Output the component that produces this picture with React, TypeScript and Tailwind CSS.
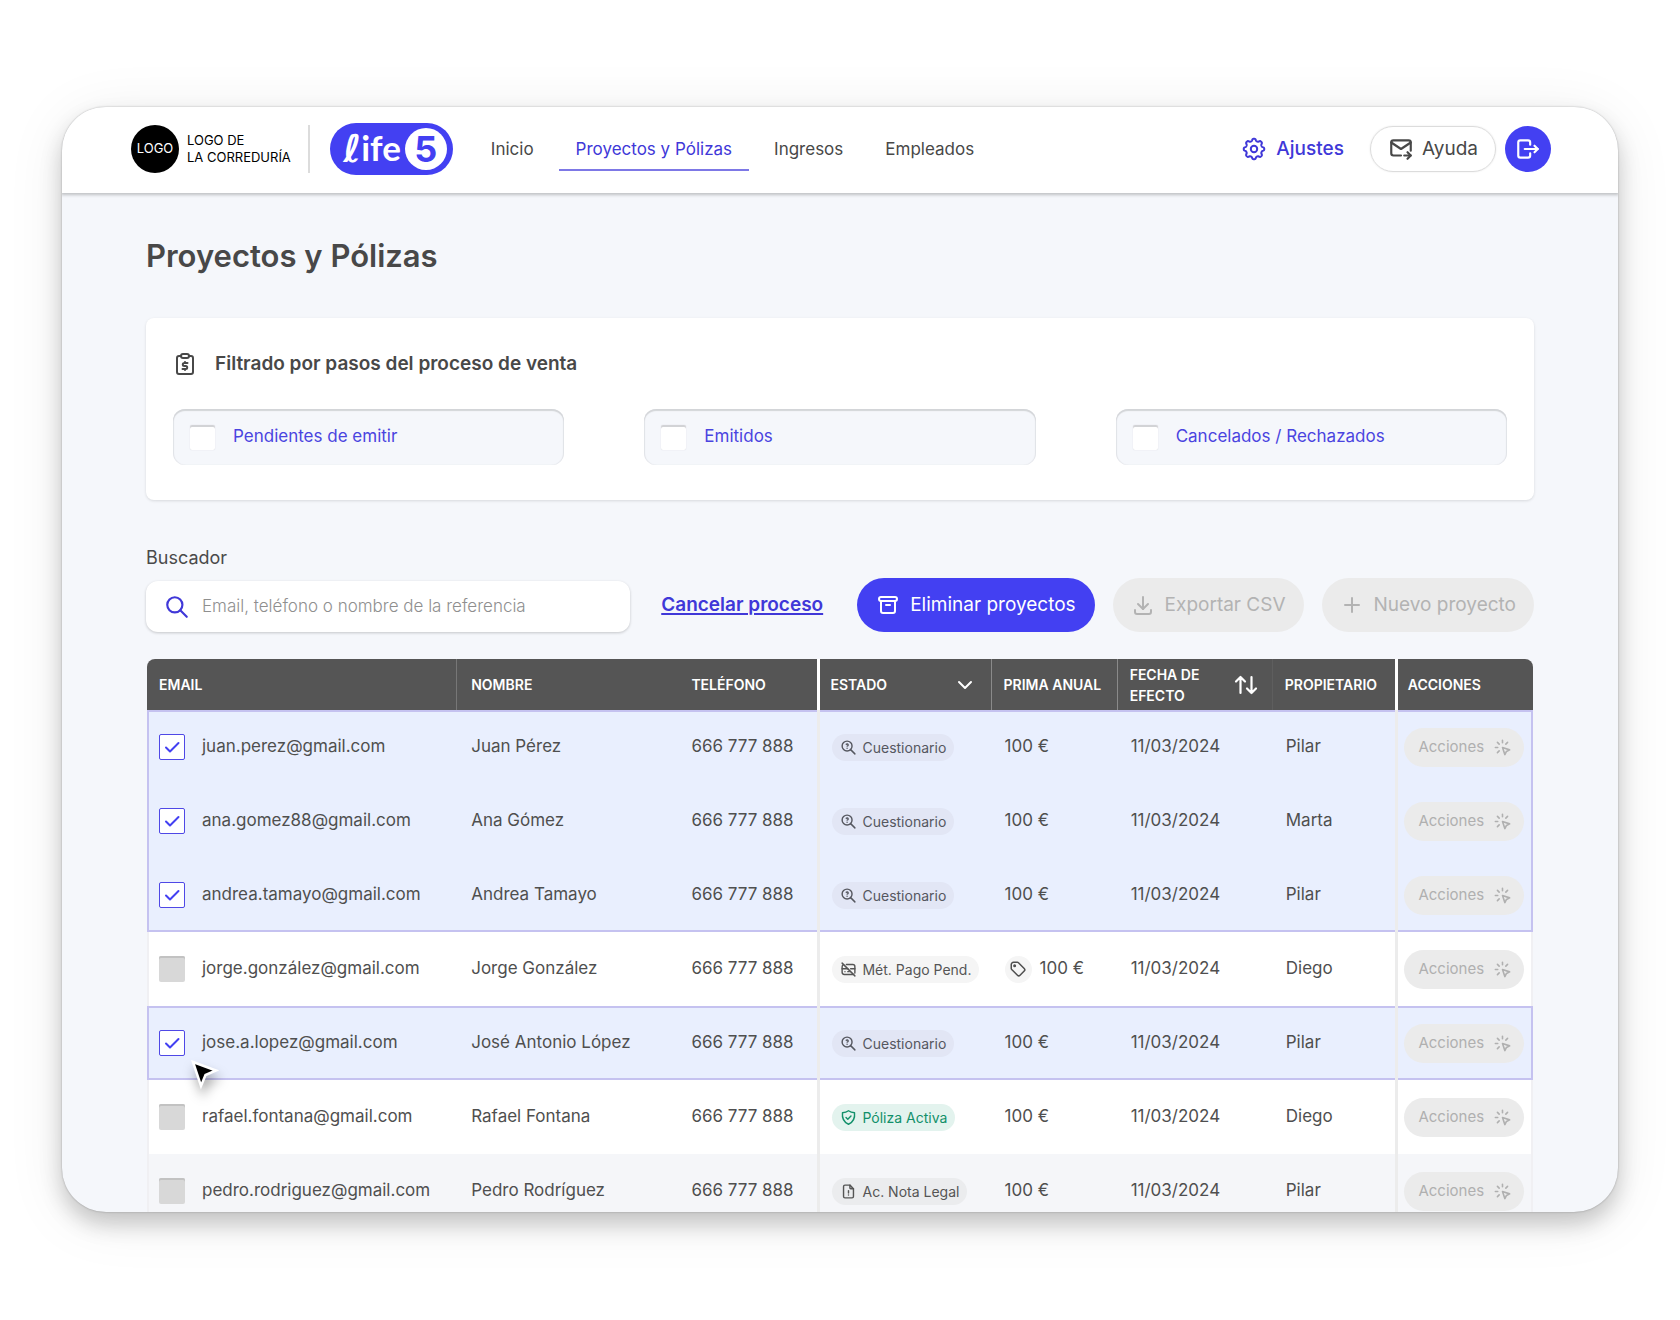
import React, { useState } from 'react';
import {
  TbArchive,
  TbChevronDown,
  TbClick,
  TbCreditCardOff,
  TbDownload,
  TbFileAlert,
  TbLogout,
  TbMailForward,
  TbPlus,
  TbSearch,
  TbTag,
  TbZoomQuestion,
} from 'react-icons/tb';

type Status = 'cuestionario' | 'pago' | 'activa' | 'legal';

interface Project {
  email: string;
  name: string;
  owner: string;
  status: Status;
  discount?: boolean;
}

const projects: Project[] = [
  { email: 'juan.perez@gmail.com', name: 'Juan Pérez', owner: 'Pilar', status: 'cuestionario' },
  { email: 'ana.gomez88@gmail.com', name: 'Ana Gómez', owner: 'Marta', status: 'cuestionario' },
  { email: 'andrea.tamayo@gmail.com', name: 'Andrea Tamayo', owner: 'Pilar', status: 'cuestionario' },
  { email: 'jorge.gonzález@gmail.com', name: 'Jorge González', owner: 'Diego', status: 'pago', discount: true },
  { email: 'jose.a.lopez@gmail.com', name: 'José Antonio López', owner: 'Pilar', status: 'cuestionario' },
  { email: 'rafael.fontana@gmail.com', name: 'Rafael Fontana', owner: 'Diego', status: 'activa' },
  { email: 'pedro.rodriguez@gmail.com', name: 'Pedro Rodríguez', owner: 'Pilar', status: 'legal' },
];

const statuses = {
  cuestionario: { label: 'Cuestionario', icon: TbZoomQuestion, style: 'bg-[#e2e6f5] text-[#55575f]' },
  pago: { label: 'Mét. Pago Pend.', icon: TbCreditCardOff, style: 'bg-[#f5f5f5] text-[#555555]' },
  activa: { label: 'Póliza Activa', icon: ShieldIcon, style: 'bg-[#e3f3ee] text-[#12906a]' },
  legal: { label: 'Ac. Nota Legal', icon: TbFileAlert, style: 'bg-[#ebecee] text-[#555555]' },
};

const navItems = ['Inicio', 'Proyectos y Pólizas', 'Ingresos', 'Empleados'];
const filters = ['Pendientes de emitir', 'Emitidos', 'Cancelados / Rechazados'];

// eight soft teeth around a circle
const gearPoints = Array.from({ length: 144 }, (_, i) => {
  const angle = (i / 144) * Math.PI * 2;
  const radius = 9.2 + 1.1 * Math.tanh(1.8 * Math.cos(angle * 8));
  return `${(12 + radius * Math.cos(angle)).toFixed(2)},${(12 + radius * Math.sin(angle)).toFixed(2)}`;
}).join(' ');

function GearIcon() {
  return (
    <svg viewBox="0 0 24 24" className="size-6" fill="none" stroke="currentColor" strokeWidth="2" strokeLinejoin="round">
      <polygon points={gearPoints} />
      <circle cx="12" cy="12" r="3.2" />
    </svg>
  );
}

function ShieldIcon({ className }: { className?: string }) {
  return (
    <svg viewBox="0 0 24 24" className={className} fill="none" stroke="currentColor" strokeWidth="2" strokeLinecap="round" strokeLinejoin="round">
      <path d="M12 2.5c2.5 1.8 5.2 2.6 8.5 2.8.8 7.2-1.5 13.2-8.5 16.2C5 18.5 2.7 12.5 3.5 5.3 6.8 5.1 9.5 4.3 12 2.5z" />
      <path d="M8.5 12l2.5 2.5 4.5-4.5" />
    </svg>
  );
}

function ClipboardIcon() {
  return (
    <svg viewBox="0 0 24 24" className="size-6" fill="none" stroke="currentColor" strokeWidth="2" strokeLinecap="round" strokeLinejoin="round">
      <path d="M8 4H6a2 2 0 0 0-2 2v14a2 2 0 0 0 2 2h12a2 2 0 0 0 2-2V6a2 2 0 0 0-2-2h-2" />
      <rect x="8" y="2" width="8" height="4" rx="2" />
      <path d="M14.5 11h-3.2a1.4 1.4 0 0 0 0 3h1.4a1.4 1.4 0 0 1 0 3H9.5M12 10v1M12 17v1" />
    </svg>
  );
}

function SortIcon() {
  return (
    <svg viewBox="0 0 24 20" className="h-5 w-6" fill="none" stroke="currentColor" strokeWidth="2.2" strokeLinecap="round" strokeLinejoin="round">
      <path d="M6.5 18V2M2 6.5 6.5 2 11 6.5M17.5 2v16M13 13.5l4.5 4.5 4.5-4.5" />
    </svg>
  );
}

function Cursor() {
  return (
    <svg viewBox="0 0 28 30" className="pointer-events-none absolute top-[30px] left-8 z-10 h-[30px] w-[28px] drop-shadow-[2px_8px_6px_rgba(0,0,0,0.35)]">
      <path d="M2 2l23 8.5-10.5 4.5-4.5 11z" fill="#000" stroke="#fff" strokeWidth="2.5" />
    </svg>
  );
}

function Header() {
  return (
    <header className="z-10 flex h-[86px] shrink-0 items-center bg-white pr-[67px] pb-0.5 pl-[69px] shadow-[0_1px_3px_1px_rgba(0,0,0,0.22)]">
      <span className="grid size-12 place-items-center rounded-full bg-black text-[13px] text-white">LOGO</span>
      <span className="ml-2 text-[13px] leading-[17px] text-black">
        LOGO DE
        <br />
        LA CORREDURÍA
      </span>
      <span className="ml-[17px] h-12 w-0.5 bg-[#dcdcdc]" />
      <a href="#" className="ml-5 flex h-[52px] w-[123px] items-center justify-end rounded-full bg-[#4340f2] pr-1.5 text-white">
        <span className="font-['DejaVu_Sans',sans-serif] text-[38px] leading-none font-bold">ℓ</span>
        <span className="pb-1 font-[Lato,sans-serif] text-[35px] leading-none font-bold">ife</span>
        <span className="ml-1 grid size-[42px] place-items-center rounded-full bg-white text-[36px] leading-none font-bold text-[#4340f2]">5</span>
      </a>
      <nav className="ml-[21px] flex gap-2 text-[17px] text-[#484848]">
        {navItems.map((item) => (
          <a
            key={item}
            href="#"
            className={
              item === 'Proyectos y Pólizas'
                ? 'border-b-2 border-[#7d78e6] px-[17px] pt-2.5 pb-1.5 text-[#4038d8]'
                : 'border-b-2 border-transparent px-[17px] pt-2.5 pb-1.5'
            }
          >
            {item}
          </a>
        ))}
      </nav>
      <div className="ml-auto flex items-center text-[19px]">
        <a href="#" className="flex items-center gap-2.5 font-medium text-[#4038d8]">
          <GearIcon />
          Ajustes
        </a>
        <button className="ml-[26px] flex h-[46px] items-center gap-2 rounded-full border border-[#dcdcdc] px-[17px] text-[#484848] shadow-[0_0_2px_rgba(0,0,0,0.1)]">
          <TbMailForward className="size-[26px]" />
          Ayuda
        </button>
        <button aria-label="Salir" className="ml-[9px] grid size-[46px] place-items-center rounded-full bg-[#4340f2] text-white">
          <TbLogout className="size-[26px]" />
        </button>
      </div>
    </header>
  );
}

function Filters() {
  return (
    <section className="mt-10 rounded-lg bg-white px-[27px] pt-8 pb-[35px] shadow-[0_1px_3px_rgba(0,0,0,0.12)]">
      <h2 className="flex items-center gap-[18px] text-[19px] leading-[28px] font-semibold text-[#484848]">
        <ClipboardIcon />
        Filtrado por pasos del proceso de venta
      </h2>
      <div className="mt-[31px] grid grid-cols-3 gap-20">
        {filters.map((label) => (
          <label
            key={label}
            className="flex h-14 items-center gap-[18px] rounded-xl bg-[#f5f7fb] px-[17px] text-[17px] text-[#4a44e0] shadow-[inset_0_2px_1px_#d3d5d8,inset_1px_0_1px_#e2e4e8,inset_-1px_0_1px_#e2e4e8]"
          >
            <input
              type="checkbox"
              className="size-[25px] appearance-none rounded-xs bg-white shadow-[inset_0_2px_0_#d2d3d6,0_0_1px_#c8c9cf]"
            />
            {label}
          </label>
        ))}
      </div>
    </section>
  );
}

function Toolbar() {
  return (
    <div className="mt-11 flex items-end">
      <div className="flex w-[484px] flex-col">
        <label htmlFor="buscador" className="text-[18px] leading-7 text-[#4a4a4a]">
          Buscador
        </label>
        <div className="mt-[9px] flex h-[51px] items-center gap-3 rounded-xl bg-white px-[18px] shadow-[0_1px_3px_rgba(0,0,0,0.2)]">
          <TbSearch className="size-[26px] shrink-0 text-[#4038d8]" />
          <input
            id="buscador"
            type="text"
            placeholder="Email, teléfono o nombre de la referencia"
            className="w-full bg-transparent text-[17px] font-light outline-none placeholder:text-[#8f8f8f]"
          />
        </div>
      </div>
      <div className="ml-auto flex h-[54px] items-center text-[19px]">
        <a href="#" className="mr-[34px] font-semibold text-[#4038d8] underline decoration-2 underline-offset-2">
          Cancelar proceso
        </a>
        <button className="flex h-full items-center gap-2.5 rounded-full bg-[#4340f2] px-[19px] text-white">
          <TbArchive className="size-6" />
          Eliminar proyectos
        </button>
        <button disabled className="ml-[18px] flex h-full items-center gap-2.5 rounded-full bg-[#ebebeb] px-[18px] text-[#b3b3b3]">
          <TbDownload className="size-6" />
          Exportar CSV
        </button>
        <button disabled className="ml-[18px] flex h-full items-center gap-2.5 rounded-full bg-[#ebebeb] px-[18px] text-[#b3b3b3]">
          <TbPlus className="size-6" />
          Nuevo proyecto
        </button>
      </div>
    </div>
  );
}

interface RowProps {
  project: Project;
  index: number;
  selected: boolean[];
  onToggle: () => void;
}

function Row({ project, index, selected, onToggle }: RowProps) {
  const checked = selected[index];
  const first = checked && !selected[index - 1];
  const last = checked && !selected[index + 1];
  const status = statuses[project.status];
  const StatusIcon = status.icon;

  let row = index === 6 ? 'bg-[#f5f6f9]' : 'bg-white';
  if (checked) row = 'bg-[#e9effe]';
  // outline only round the outside of a run of selected rows
  if (first && last) row += ' *:shadow-[inset_0_2px_0_#c5c2f0,inset_0_-2px_0_#c5c2f0]';
  else if (first) row += ' *:shadow-[inset_0_2px_0_#c5c2f0]';
  else if (last) row += ' *:shadow-[inset_0_-2px_0_#c5c2f0]';

  const edge = checked ? 'border-[#c5c2f0]' : 'border-[#f0f0f3]';

  return (
    <tr className={`h-[74px] ${row}`}>
      <td className={`border-l-2 pl-2.5 ${edge}`}>
        <div className="relative flex items-center gap-[17px]">
          <span className="grid shrink-0">
            <input
              id={`row-${index}`}
              type="checkbox"
              checked={checked}
              onChange={onToggle}
              className="size-[26px] appearance-none rounded-xs bg-[#d8d8d8] shadow-[inset_0_2px_0_#c2c2c2] [grid-area:1/1] checked:border checked:border-[#4f48e6] checked:bg-white checked:shadow-none"
            />
            {checked && (
              <svg viewBox="0 0 26 26" className="pointer-events-none size-[26px] text-[#4340f2] [grid-area:1/1]" fill="none" stroke="currentColor" strokeWidth="2" strokeLinecap="round" strokeLinejoin="round">
                <path d="M7 13.5l4 4 8.5-8.5" />
              </svg>
            )}
          </span>
          <label htmlFor={`row-${index}`}>{project.email}</label>
          {index === 4 && <Cursor />}
        </div>
      </td>
      <td className="pl-3.5">{project.name}</td>
      <td className="pl-3">666 777 888</td>
      <td className="border-l-[3px] border-[#ececec] pl-3">
        <span className={`flex h-[27px] w-fit items-center gap-[5px] rounded-full px-2 text-[14px] ${status.style}`}>
          <StatusIcon className="size-[17px]" />
          {status.label}
        </span>
      </td>
      <td className="pl-3.5">
        <div className="flex items-center gap-2">
          {project.discount && (
            <span className="grid size-[27px] place-items-center rounded-full bg-[#f5f5f5]">
              <TbTag className="size-[18px]" />
            </span>
          )}
          100 €
        </div>
      </td>
      <td className="pl-3.5">11/03/2024</td>
      <td className="pl-3.5">{project.owner}</td>
      <td className="border-l-[3px] border-[#ececec]">
        <div className={`flex h-[74px] items-center justify-center border-r-2 ${edge}`}>
          <button disabled className="flex h-[39px] w-[120px] items-center justify-between rounded-full bg-[#ebebeb] pr-3 pl-3.5 text-[15px] text-[#b0b0b0]">
            Acciones
            <TbClick className="size-[19px]" />
          </button>
        </div>
      </td>
    </tr>
  );
}

function ProjectsTable() {
  const [selected, setSelected] = useState([true, true, true, false, true, false, false]);

  const toggle = (index: number) => {
    setSelected(selected.map((value, i) => (i === index ? !value : value)));
  };

  return (
    <div className="mx-px mt-[27px] overflow-hidden rounded-t-lg">
      <table className="w-full table-fixed border-separate border-spacing-0 text-left text-[17px] text-[#4f4f4f]">
        <colgroup>
          <col className="w-[310px]" />
          <col className="w-[222px]" />
          <col className="w-[138px]" />
          <col className="w-[173px]" />
          <col className="w-[126px]" />
          <col className="w-[155px]" />
          <col className="w-[123px]" />
          <col className="w-[138px]" />
        </colgroup>
        <thead className="bg-[#555555] text-[14px] leading-[21px] text-white *:h-[51px] [&_th]:font-semibold">
          <tr>
            <th className="border-r border-[#777777] pl-3">EMAIL</th>
            <th className="pl-3.5">NOMBRE</th>
            <th className="pl-3">TELÉFONO</th>
            <th className="border-l-[3px] border-white pr-3.5 pl-2.5">
              <span className="flex items-center justify-between">
                ESTADO
                <TbChevronDown className="size-6" />
              </span>
            </th>
            <th className="border-l border-[#8a8a8a] pl-3">PRIMA ANUAL</th>
            <th className="border-l border-[#8a8a8a] pr-3.5 pl-3">
              <span className="flex items-center justify-between">
                <span>
                  FECHA DE
                  <br />
                  EFECTO
                </span>
                <SortIcon />
              </span>
            </th>
            <th className="border-l border-[#5e5e5e] pl-3">PROPIETARIO</th>
            <th className="border-l-[3px] border-white pl-2.5">ACCIONES</th>
          </tr>
        </thead>
        <tbody>
          {projects.map((project, index) => (
            <Row key={project.email} project={project} index={index} selected={selected} onToggle={() => toggle(index)} />
          ))}
        </tbody>
      </table>
    </div>
  );
}

export default function App() {
  return (
    <div className="flex h-screen flex-col bg-white px-[62px] pt-[107px] pb-[108px] font-[Inter,sans-serif]">
      <div className="flex min-h-0 flex-1 flex-col overflow-hidden rounded-[44px] bg-[#f5f7fb] shadow-[0_0_2px_rgba(0,0,0,0.3),0_12px_22px_rgba(0,0,0,0.2),0_8px_60px_rgba(0,0,0,0.08)]">
        <Header />
        <main className="min-h-0 flex-1 overflow-hidden px-[84px] pt-10">
          <h1 className="text-[31px] leading-[45px] font-semibold text-[#484848]">Proyectos y Pólizas</h1>
          <Filters />
          <Toolbar />
          <ProjectsTable />
        </main>
      </div>
    </div>
  );
}
